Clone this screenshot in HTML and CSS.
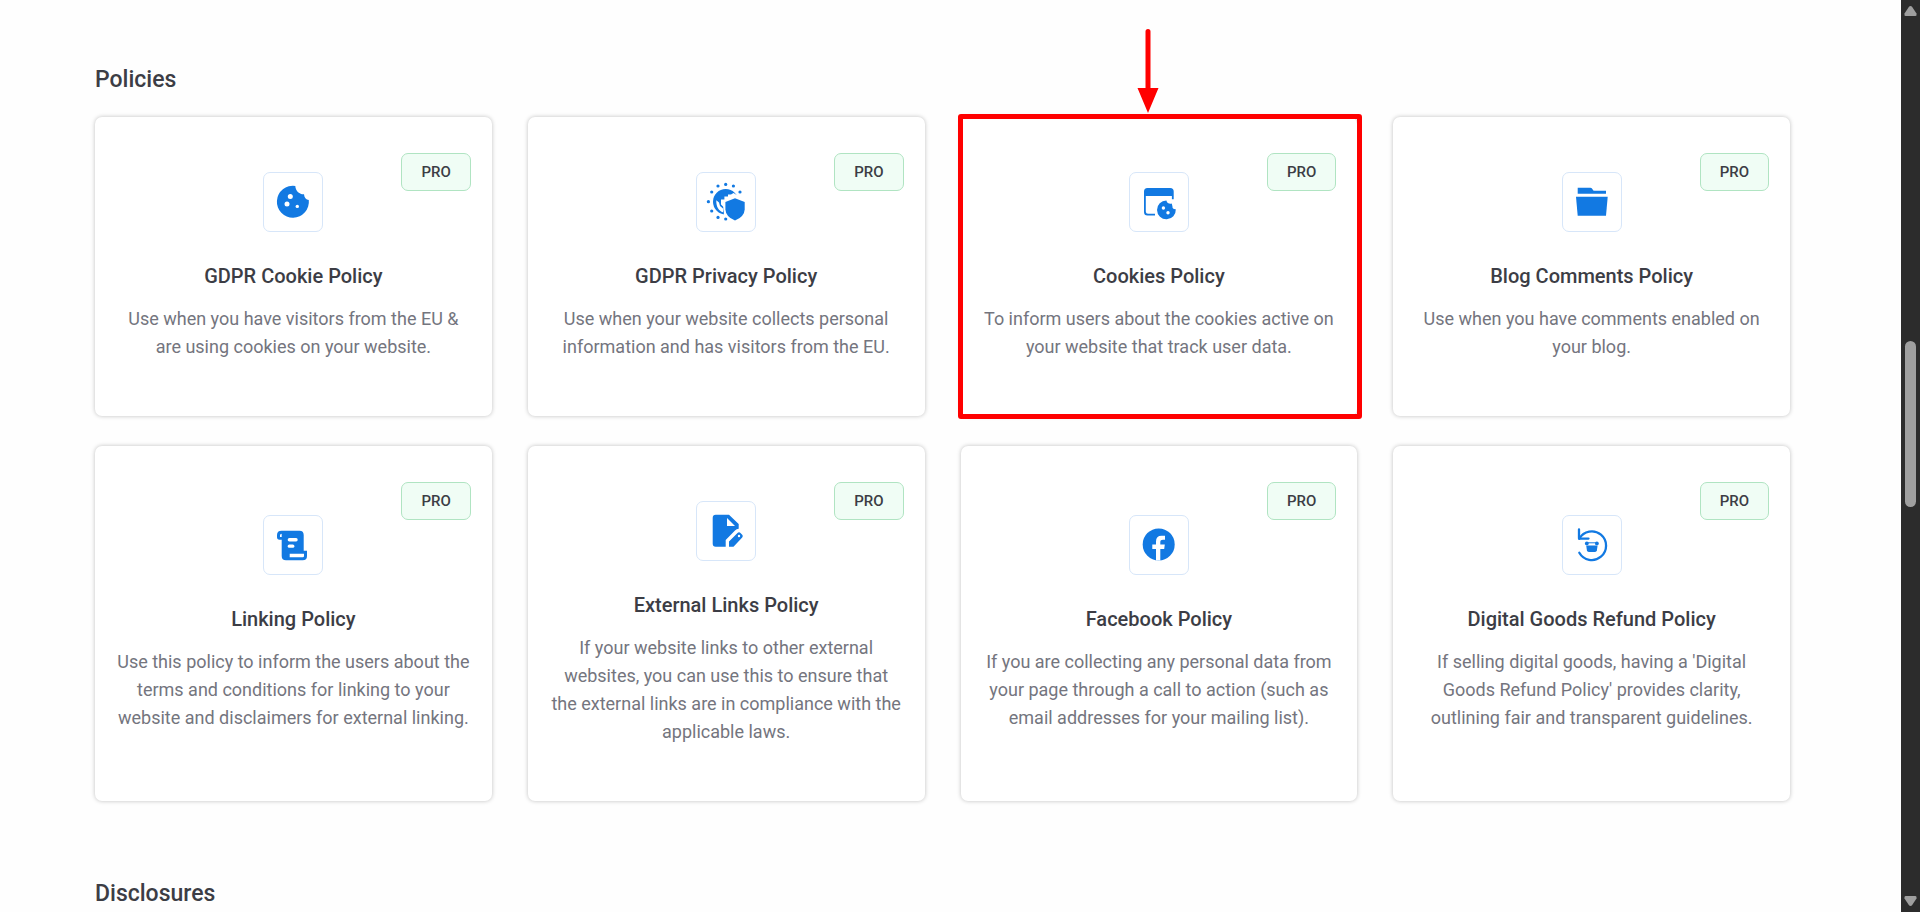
FILE: index.html
```html
<!DOCTYPE html>
<html lang="en">

<head>
    <meta charset="UTF-8">
    <meta name="viewport" content="width=device-width, initial-scale=1.0">
    <title>Policies</title>
    <link rel="stylesheet" href="styles.css">
</head>

<body>
    <main class="page">
        <section class="group">
            <h2 class="group-title">Policies</h2>
            <div class="cards">

                <article class="card">
                    <span class="badge">PRO</span>
                    <div class="icon">
                        <svg viewBox="0 0 40 40">
                            <path d="M22.3 3.9A16 16 0 1 0 35.8 18C33 17.8 31.2 15.5 31 12.2C27.5 12.6 22.5 9.5 22.3 3.9Z"/>
                            <g class="cut">
                                <circle cx="17.3" cy="14.4" r="2.5"/>
                                <circle cx="14" cy="22" r="2.5"/>
                                <circle cx="24.3" cy="24.4" r="1.7"/>
                            </g>
                        </svg>
                    </div>
                    <h3 class="card-title">GDPR Cookie Policy</h3>
                    <p class="card-text">Use when you have visitors from the EU &amp; are using cookies on your website.</p>
                </article>

                <article class="card">
                    <span class="badge">PRO</span>
                    <div class="icon">
                        <svg viewBox="0 0 40 40">
                            <!-- ring of stars -->
                            <circle cx="19.7" cy="2.4" r="1.6"/>
                            <circle cx="27.4" cy="4" r="1.6"/>
                            <circle cx="34" cy="10" r="1.6"/>
                            <circle cx="12" cy="4" r="1.6"/>
                            <circle cx="5.7" cy="10" r="1.6"/>
                            <circle cx="2.4" cy="19.7" r="1.6"/>
                            <circle cx="5.7" cy="29" r="1.6"/>
                            <circle cx="12" cy="35.4" r="1.6"/>
                            <circle cx="19.7" cy="37" r="1.6"/>
                            <!-- globe -->
                            <circle cx="19.7" cy="19.7" r="12.7"/>
                            <path class="cut" d="M10.3 18.2L13 20.5L14 24L17 26.5V30.2C13 29 10 25 10.3 18.2Z"/>
                            <path class="cut" d="M15 21V17.5H18.4V14.6H22V12.6H25L27.5 11L34 15L30 32L18 34L17.5 25L15 22.5Z"/>
                            <!-- shield -->
                            <path class="cut" d="M29 14L40.5 18.5V28Q40 36 29 40.5Q18 36 17.5 28V18.5Z"/>
                            <path d="M29 16.2L38.7 19.9V27.5Q38.3 34.8 29 38.6Q19.8 34.8 19.4 27.5V19.9Z"/>
                        </svg>
                    </div>
                    <h3 class="card-title">GDPR Privacy Policy</h3>
                    <p class="card-text">Use when your website collects personal information and has visitors from the EU.</p>
                </article>

                <article class="card marked">
                    <span class="badge">PRO</span>
                    <div class="icon">
                        <svg viewBox="0 0 40 40">
                            <path d="M5 14V9.5Q5 6 8.5 6H31.2Q34.7 6 34.7 9.5V17.3H32.9V14H6.8V29.5Q6.8 31.8 9 31.8H16V33.4H8.5Q5 33.4 5 29.9Z"/>
                            <path d="M27.4 18.4A9.4 9.4 0 1 0 36.8 27.3C34.3 27.4 33.3 26.3 33.5 24.8L32.8 21.5C30.3 22.2 28 21 27.4 18.4Z"/>
                            <g class="cut">
                                <circle cx="24.4" cy="26" r="1.7"/>
                                <circle cx="29" cy="30.7" r="1.7"/>
                            </g>
                        </svg>
                    </div>
                    <h3 class="card-title">Cookies Policy</h3>
                    <p class="card-text">To inform users about the cookies active on your website that track user data.</p>
                    <svg class="arrow" viewBox="0 0 22 84">
                        <path d="M8.5 2.5Q8.5 0 11 0T13.5 2.5V59H21.5L11 84L0.5 59H8.5Z"/>
                    </svg>
                </article>

                <article class="card">
                    <span class="badge">PRO</span>
                    <div class="icon">
                        <svg viewBox="0 0 40 40">
                            <path d="M5.7 5.7H18.5Q20 5.7 20.5 7.2Q21 8.7 22.5 8.7H34V11.7H5.7Z"/>
                            <path d="M4 14.7H35.7L34 33.7H5.7Z"/>
                        </svg>
                    </div>
                    <h3 class="card-title">Blog Comments Policy</h3>
                    <p class="card-text">Use when you have comments enabled on your blog.</p>
                </article>

                <article class="card">
                    <span class="badge">PRO</span>
                    <div class="icon">
                        <svg viewBox="0 0 40 40">
                            <path d="M8.5 5.7H26.5Q30.7 5.7 30.7 10V25.7H34V31Q34 35.3 29.7 35.3H13Q8.7 35.3 8.7 31V14.7H6.5Q4 14.7 4 12V10Q4 5.7 8.5 5.7Z"/>
                            <g class="cut">
                                <path d="M8.7 8.7V12H7V10Q7 8.9 8.7 8.7Z"/>
                                <rect x="14.7" y="13.1" width="10" height="3.3" rx="1.6"/>
                                <rect x="14.7" y="19.5" width="6.7" height="3.3" rx="1.6"/>
                                <path d="M16.7 28.7H31V31Q31 32.3 29.7 32.3H16.7Z"/>
                            </g>
                        </svg>
                    </div>
                    <h3 class="card-title">Linking Policy</h3>
                    <p class="card-text">Use this policy to inform the users about the terms and conditions for linking to your website and disclaimers for external linking.</p>
                </article>

                <article class="card">
                    <span class="badge">PRO</span>
                    <div class="icon">
                        <svg viewBox="0 0 40 40">
                            <path d="M9.7 3.7H23L32.7 13V17.7Q30.5 17.7 29 19.5L19.7 29V35.7H9.7Q6.7 35.7 6.7 32.7V6.7Q6.7 3.7 9.7 3.7Z"/>
                            <path class="cut" d="M21 7V15H29Z"/>
                            <path d="M23 30.5L31.5 22Q33 20.5 34.5 22L36.2 23.7Q37.5 25 36.2 26.5L27.5 35.7H23Z"/>
                            <circle class="cut" cx="33" cy="25" r="1.2"/>
                        </svg>
                    </div>
                    <h3 class="card-title">External Links Policy</h3>
                    <p class="card-text">If your website links to other external websites, you can use this to ensure that the&nbsp;external links are in compliance with the applicable laws.</p>
                </article>

                <article class="card">
                    <span class="badge">PRO</span>
                    <div class="icon">
                        <svg viewBox="0 0 40 40">
                            <circle cx="19.7" cy="19.4" r="16"/>
                            <path class="cut" d="M17 35.5V24H13.3V19.5H17V16.5Q17 10.7 22.5 10.7H26V14.7H24Q21.3 14.7 21.3 17V19.5H25.8L25.2 24H21.3V35.5Z"/>
                        </svg>
                    </div>
                    <h3 class="card-title">Facebook Policy</h3>
                    <p class="card-text">If you are collecting any personal data from your page through a call to action (such as email addresses for your mailing list).</p>
                </article>

                <article class="card">
                    <span class="badge">PRO</span>
                    <div class="icon">
                        <svg viewBox="0 0 40 40">
                            <path class="line" d="M7.3 27.7A14.3 14.3 0 1 0 7.3 13.7"/>
                            <path class="line" d="M7 4.5V13.6H16.5"/>
                            <path d="M14.2 20.5H25.6L24.9 25.2Q24.6 26.9 23 26.9H16.8Q15.2 26.9 14.9 25.2Z"/>
                            <circle cx="14.8" cy="18.4" r="1.9"/>
                            <circle cx="24.9" cy="18.4" r="1.9"/>
                            <path d="M15 17.3H25V18.3H15Z"/>
                        </svg>
                    </div>
                    <h3 class="card-title">Digital Goods Refund Policy</h3>
                    <p class="card-text">If selling digital goods, having a 'Digital Goods Refund Policy' provides clarity, outlining fair and transparent guidelines.</p>
                </article>

            </div>
        </section>

        <section class="group">
            <h2 class="group-title">Disclosures</h2>
        </section>
    </main>

    <div class="scrollbar">
        <svg class="scroll-arrow" viewBox="0 0 13 10"><path d="M6.5 0Q7.5 0 8.2 1L12.5 7.5Q13 10 11.5 10H1.5Q0 10 0.5 7.5L4.8 1Q5.5 0 6.5 0Z"/></svg>
        <div class="scroll-track">
            <div class="scroll-thumb"></div>
        </div>
        <svg class="scroll-arrow" viewBox="0 0 13 10"><path d="M6.5 10Q7.5 10 8.2 9L12.5 2.5Q13 0 11.5 0H1.5Q0 0 0.5 2.5L4.8 9Q5.5 10 6.5 10Z"/></svg>
    </div>
</body>

</html>
```
FILE: styles.css
```css
* {
    box-sizing: border-box;
    margin: 0;
    padding: 0;
}

body {
    display: flex;
    height: 100vh;
    overflow: hidden;
    background: #fefefe;
    color: #3c3d45;
    font-family: Roboto, "Liberation Sans", sans-serif;
}

.page {
    flex: 1;
    min-width: 0;
    padding: 64px 111px 0 95px;
}

.group {
    margin-bottom: 77px;
}

.group-title {
    margin-bottom: 21px;
    font-size: 23px;
    font-weight: 500;
    line-height: 32px;
}

.cards {
    display: grid;
    grid-template-columns: repeat(4, 1fr);
    gap: 30px 36px;
}

.card {
    position: relative;
    display: flex;
    flex-direction: column;
    align-items: center;
    justify-content: center;
    padding: 55px 20px;
    border-radius: 7px;
    background: #fff;
    box-shadow: 0 0 4px rgba(0, 0, 0, 0.25);
    text-align: center;
}

.badge {
    position: absolute;
    top: 36px;
    right: 21px;
    padding: 0 19px;
    border: 1px solid #b0e4c2;
    border-radius: 7px;
    background: #f0fdf5;
    font-size: 15px;
    font-weight: 500;
    line-height: 36px;
}

.icon {
    display: flex;
    align-items: center;
    justify-content: center;
    width: 60px;
    height: 60px;
    margin-bottom: 32px;
    border: 1px solid #d7e6f9;
    border-radius: 7px;
}

.icon svg {
    width: 40px;
    height: 40px;
    fill: #1279e2;
}

.icon .cut {
    fill: #fff;
}

.icon .line {
    fill: none;
    stroke: #1279e2;
    stroke-width: 2.3;
    stroke-linecap: round;
    stroke-linejoin: round;
}

.card-title {
    margin-bottom: 17px;
    font-size: 20px;
    font-weight: 500;
    line-height: 24px;
}

.card-text {
    color: #74757e;
    font-size: 18px;
    line-height: 28px;
}

/* red frame and arrow over the highlighted card */
.marked::after {
    content: "";
    position: absolute;
    inset: -3px -5px -3px -3px;
    border: 5px solid #f00;
    border-radius: 3px;
}

.arrow {
    position: absolute;
    bottom: 100%;
    left: 50%;
    width: 22px;
    height: 84px;
    margin: 0 0 4px -22px;
    fill: #f00;
}

.scrollbar {
    display: flex;
    flex-direction: column;
    align-items: center;
    width: 19px;
    padding: 6px 0;
    background: #2c2c2c;
}

.scroll-arrow {
    width: 13px;
    height: 10px;
    fill: #9f9f9f;
}

.scroll-track {
    flex: 1;
    padding-top: 325px;
}

.scroll-thumb {
    width: 11px;
    height: 166px;
    border-radius: 6px;
    background: #9f9f9f;
}
```
